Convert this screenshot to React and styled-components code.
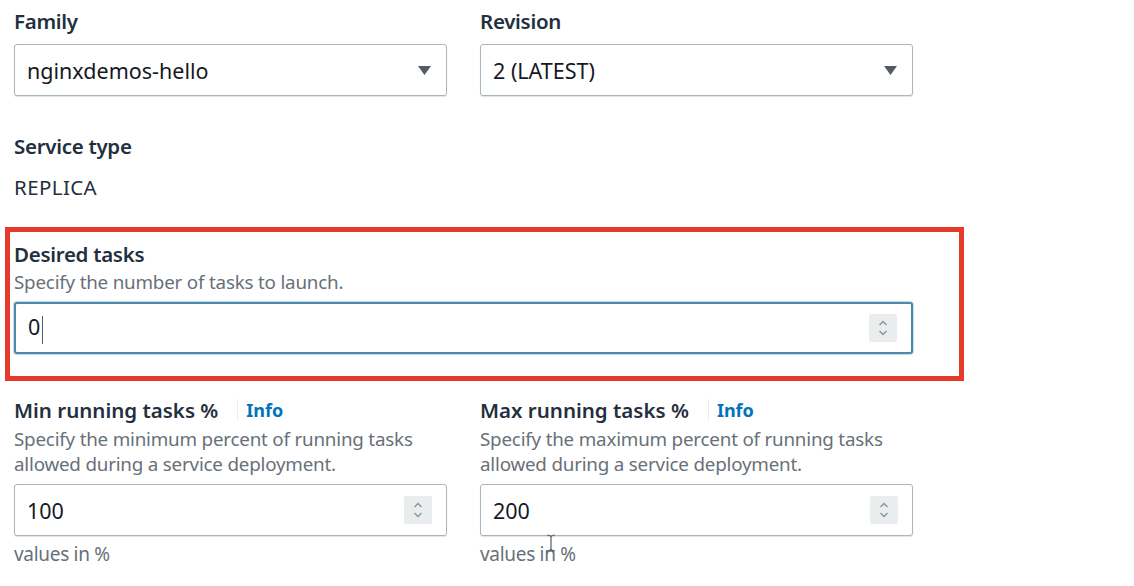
import React from "react";
import styled, { createGlobalStyle } from "styled-components";

const GlobalStyle = createGlobalStyle`
  body {
    margin: 0;
    background: #ffffff;
    font-family: "Noto Sans", "Open Sans", Arial, sans-serif;
    color: #16191f;
  }
`;

const Page = styled.div`
  width: 899px;
  padding: 9px 0 0 14px;
`;

const Row = styled.div`
  display: grid;
  grid-template-columns: 433px 433px;
  column-gap: 33px;
`;

const Field = styled.div`
  position: relative;
  display: flex;
  flex-direction: column;
`;

const LabelRow = styled.div`
  display: flex;
  align-items: center;
`;

const Label = styled.div`
  font-size: 20.5px;
  font-weight: 600;
  line-height: 24px;
  color: #232f3e;
  letter-spacing: ${(p) => (p.$wide ? "0" : "-0.3px")};
`;

const InfoLink = styled.span`
  margin-left: 19px;
  padding-left: 8px;
  border-left: 1px solid #eaeded;
  font-size: 18px;
  font-weight: 700;
  line-height: 22px;
  color: #0073bb;
`;

const Description = styled.div`
  margin-top: ${(p) => p.$top || 5}px;
  font-size: 18.8px;
  line-height: 25px;
  color: #687078;
  letter-spacing: -0.2px;
`;

const Value = styled.div`
  margin-top: 17px;
  font-size: 20.5px;
  line-height: 24px;
  color: #232f3e;
  letter-spacing: 0.4px;
`;

const Box = styled.div`
  box-sizing: border-box;
  height: 52px;
  margin-top: ${(p) => p.$top}px;
  display: flex;
  align-items: center;
  justify-content: space-between;
  padding: 0 14px 0 12px;
  border: ${(p) => (p.$focused ? "2px solid #4d87a9" : "1px solid #aab7b8")};
  border-radius: 3px;
  box-shadow: ${(p) =>
    p.$focused ? "0 0 0 1px #c6deec" : "0 1px 1px rgba(0, 28, 36, 0.12)"};
  background: #ffffff;
  font-size: 21.5px;
  color: #16191f;
  letter-spacing: 0;
`;

const Caret = styled.span`
  display: inline-block;
  width: 1px;
  height: 28px;
  margin-left: 2px;
  vertical-align: middle;
  background: #545b64;
`;

const Spinner = styled.div`
  width: 28px;
  height: 28px;
  border-radius: 2px;
  background: #eaeded;
  display: flex;
  align-items: center;
  justify-content: center;
`;

const Highlight = styled.div`
  margin: 28px 0 0 -9px;
  width: 959px;
  box-sizing: border-box;
  padding: 10px 46px 22px 4px;
  border: 5px solid #e63a2c;
`;

const Spacer = styled.div`
  height: ${(p) => p.$h}px;
`;

const Help = styled.div`
  position: relative;
  margin-top: 6px;
  font-size: 19px;
  line-height: 24px;
  color: #687078;
  letter-spacing: -0.3px;
`;

const Pointer = styled.svg`
  position: absolute;
  left: 66px;
  top: -8px;
`;

function Arrow() {
  return (
    <svg width="15" height="11" viewBox="0 0 15 11">
      <path d="M1 1h13l-6.5 9z" fill="#545b64" />
    </svg>
  );
}

function Stepper() {
  return (
    <Spinner>
      <svg width="12" height="20" viewBox="0 0 12 20" fill="none">
        <path
          d="M2.5 7l3.5-3.5L9.5 7M2.5 13l3.5 3.5 3.5-3.5"
          stroke="#879596"
          strokeWidth="1.4"
        />
      </svg>
    </Spinner>
  );
}

function Select({ value }) {
  return (
    <Box $top={11}>
      <span>{value}</span>
      <Arrow />
    </Box>
  );
}

function RangeField({ label, text, value, cursor }) {
  return (
    <Field>
      <LabelRow>
        <Label $wide>{label}</Label>
        <InfoLink>Info</InfoLink>
      </LabelRow>
      <Description>{text}</Description>
      <Box $top={7}>
        <span>{value}</span>
        <Stepper />
      </Box>
      <Help>
        values in %
        {cursor && (
          <Pointer width="10" height="18" viewBox="0 0 10 18" fill="none">
            <path
              d="M1 1c2 0 3 .5 4 1.5C6 1.5 7 1 9 1M5 2.5v13M1 17c2 0 3-.5 4-1.5 1 1 2 1.5 4 1.5"
              stroke="#545b64"
              strokeWidth="1.2"
            />
          </Pointer>
        )}
      </Help>
    </Field>
  );
}

export default function App() {
  return (
    <>
      <GlobalStyle />
      <Page>
        <Row>
          <Field>
            <Label>Family</Label>
            <Select value="nginxdemos-hello" />
          </Field>
          <Field>
            <Label>Revision</Label>
            <Select value="2 (LATEST)" />
          </Field>
        </Row>

        <Spacer $h={38} />
        <Label>Service type</Label>
        <Value>REPLICA</Value>

        <Highlight>
          <Field>
            <Label>Desired tasks</Label>
            <Description $top={4}>Specify the number of tasks to launch.</Description>
            <Box $top={7} $focused>
              <span>
                0<Caret />
              </span>
              <Stepper />
            </Box>
          </Field>
        </Highlight>

        <Spacer $h={17} />
        <Row>
          <RangeField
            label="Min running tasks %"
            text={
              <>
                Specify the minimum percent of running tasks
                <br />
                allowed during a service deployment.
              </>
            }
            value="100"
          />
          <RangeField
            label="Max running tasks %"
            text={
              <>
                Specify the maximum percent of running tasks
                <br />
                allowed during a service deployment.
              </>
            }
            value="200"
            cursor
          />
        </Row>
      </Page>
    </>
  );
}
